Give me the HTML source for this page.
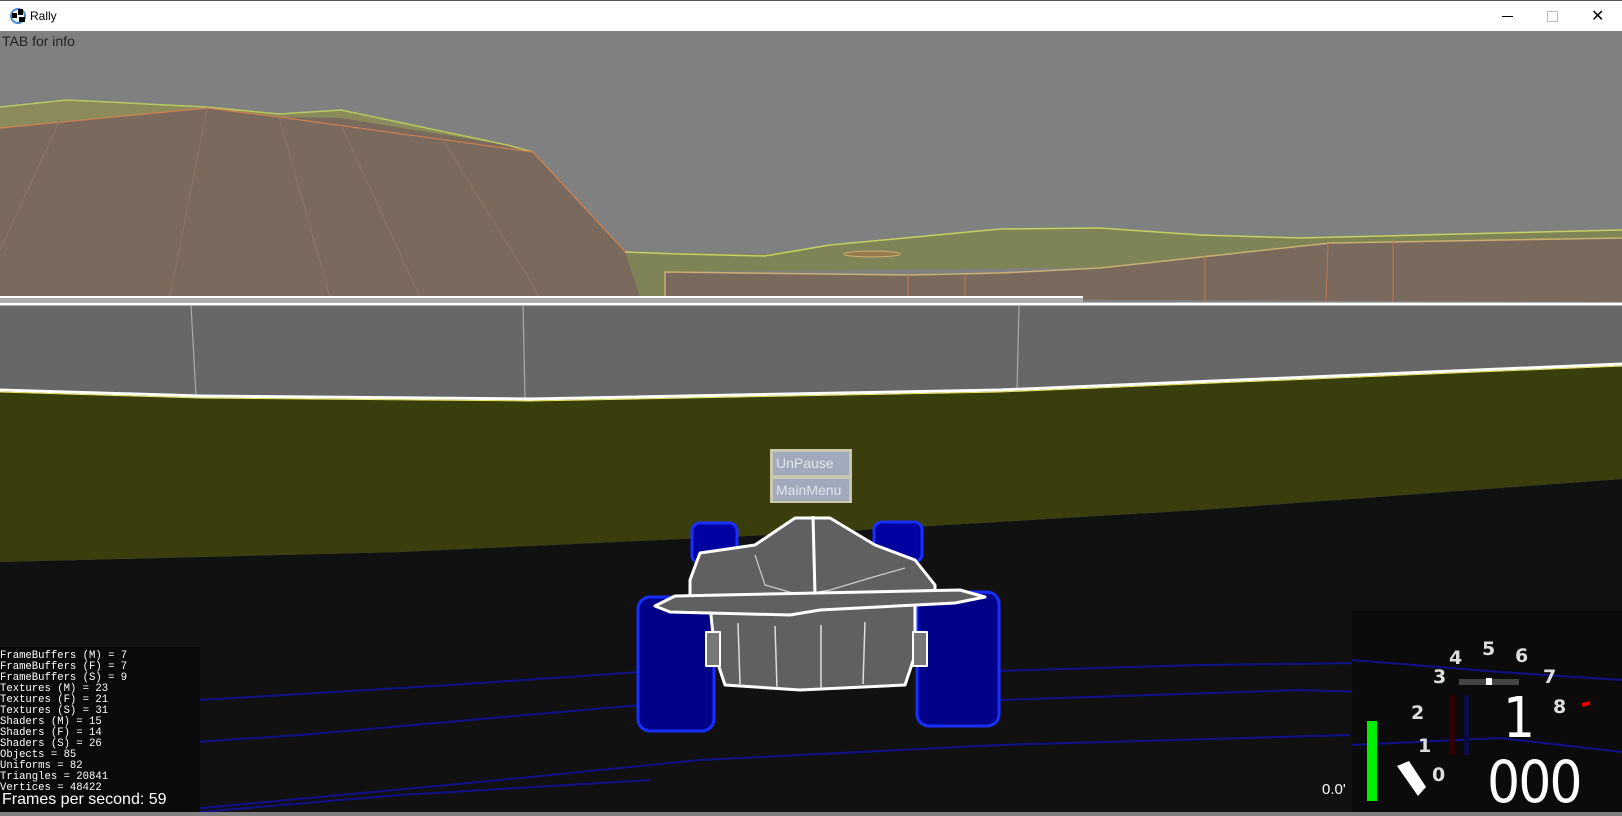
<!DOCTYPE html>
<html><head><meta charset="utf-8"><style>
*{margin:0;padding:0}
body{width:1622px;height:812px;overflow:hidden;position:relative;background:#808080;font-family:"Liberation Sans",sans-serif}
#tb{position:absolute;left:0;top:0;width:1622px;height:31px;background:#fff;border-top:1px solid #555;box-sizing:border-box}
.t{position:absolute;white-space:pre}
svg{position:absolute;left:0;top:0}
.dbg{position:absolute;left:0;top:647px;width:200px;height:165px;background:#0a0a0a;font-family:"Liberation Mono","DejaVu Sans Mono",monospace;font-size:10.6px;line-height:11px;color:#fff;padding-top:0}
</style></head><body>
<svg width="1622" height="812" viewBox="0 0 1622 812">
<!-- left hill -->
<polygon points="0,107 67,100 207,107 279,114 341,110 507,145 533,152 667,297 0,297" fill="#7a6a5e"/>
<polygon points="0,107 67,100 207,107 279,114 341,110 507,145 533,152 507,145 341,118 279,117 207,108 0,128" fill="#8a8a5a"/>
<polyline points="0,107 67,100 207,107 279,114 341,110 507,145 533,152" fill="none" stroke="#b8c860" stroke-width="1.5"/>
<polyline points="0,128 207,108 279,117 533,152 667,297" fill="none" stroke="#d08050" stroke-width="1.2"/>
<g stroke="#8c7566" stroke-width="1"><line x1="60" y1="120" x2="0" y2="250"/><line x1="207" y1="108" x2="170" y2="297"/><line x1="279" y1="117" x2="330" y2="297"/><line x1="341" y1="125" x2="420" y2="297"/><line x1="440" y1="135" x2="540" y2="297"/></g>
<!-- right terrain -->
<polygon points="625,252 765,254 830,245 1000,229 1100,228 1200,235 1300,238 1622,230 1622,262 665,272 680,297 640,297" fill="#7f8456"/>
<polyline points="625,252 680,254 765,256 830,245 1000,229 1100,228 1200,235 1300,238 1622,230" fill="none" stroke="#c4d060" stroke-width="1.5"/>
<polygon points="665,272 910,275 1000,273 1100,268 1330,243 1622,238 1622,302 665,298" fill="#7a6a5e"/>
<polyline points="665,297 665,272 910,275 1000,273 1100,268 1330,243 1622,238" fill="none" stroke="#c8b070" stroke-width="1.5"/>
<g stroke="#c07850" stroke-width="1"><line x1="908" y1="275" x2="908" y2="297"/><line x1="965" y1="274" x2="965" y2="297"/><line x1="1205" y1="255" x2="1205" y2="302"/><line x1="1328" y1="243" x2="1326" y2="302"/><line x1="1393" y1="240" x2="1393" y2="302"/></g>
<ellipse cx="872" cy="254" rx="28" ry="3" fill="#9a7850" stroke="#c8b070"/>
<!-- wall -->
<polygon points="0,302 1622,302 1622,364 1000,390 530,399 200,396 0,390" fill="#676767"/>
<rect x="0" y="296" width="1083" height="6" fill="#aaa"/>
<line x1="0" y1="297" x2="1083" y2="297" stroke="#fff" stroke-width="2"/>
<line x1="0" y1="304" x2="1622" y2="304" stroke="#fff" stroke-width="3"/>
<g stroke="#aaa" stroke-width="1.2"><line x1="191" y1="305" x2="196" y2="396"/><line x1="523" y1="305" x2="525" y2="398"/><line x1="1019" y1="305" x2="1017" y2="391"/></g>
<!-- olive -->
<polygon points="0,390 200,396 530,399 1000,390 1622,364 1622,479 1200,510 811,533 400,552 0,562" fill="#3a3e0d"/>
<polyline points="0,390 200,396 530,399 1000,390 1622,364" fill="none" stroke="#fff" stroke-width="3"/>
<polyline points="0,392 200,398 530,401 1000,392 1622,366" fill="none" stroke="#e8e860" stroke-width="1"/>
<!-- ground -->
<polygon points="0,562 400,552 811,533 1200,510 1622,479 1622,812 0,812" fill="#111"/>
<g stroke="#10108a" stroke-width="2" fill="none">
<polyline points="200,700 450,685 640,672"/>
<polyline points="0,755 300,735 640,705"/>
<polyline points="160,812 500,780 700,760 1000,745 1350,735"/>
<polyline points="960,672 1200,665 1622,660"/>
<polyline points="1000,700 1300,690 1622,700"/>
<polyline points="200,812 400,795 650,780"/>
</g>
<!-- car -->
<g stroke-linejoin="round">
<rect x="692" y="523" width="45" height="40" rx="8" fill="#0000a0" stroke="#1830ff" stroke-width="3"/>
<rect x="874" y="522" width="48" height="40" rx="8" fill="#0000a0" stroke="#1830ff" stroke-width="3"/>
<polygon points="690,580 700,553 755,545 795,518 830,518 875,545 915,560 935,585 935,600 690,600" fill="#606060" stroke="#fff" stroke-width="3"/>
<polyline points="813,516 815,595" stroke="#fff" stroke-width="3" fill="none"/>
<polyline points="755,555 765,585 800,595 830,590 870,578 905,568" stroke="#ccc" stroke-width="1.2" fill="none"/>
<rect x="638" y="597" width="76" height="134" rx="12" fill="#000088" stroke="#1830ff" stroke-width="3"/>
<rect x="917" y="592" width="82" height="134" rx="12" fill="#000088" stroke="#1830ff" stroke-width="3"/>
<polygon points="710,605 915,605 915,655 905,685 800,690 725,685 715,655" fill="#606060" stroke="#fff" stroke-width="3"/>
<g stroke="#ddd" stroke-width="1.5"><line x1="738" y1="623" x2="740" y2="684"/><line x1="775" y1="626" x2="777" y2="688"/><line x1="821" y1="625" x2="821" y2="688"/><line x1="865" y1="622" x2="863" y2="684"/></g>
<polygon points="655,606 675,596 960,590 985,597 955,603 820,610 790,615 670,612" fill="#606060" stroke="#fff" stroke-width="3"/>
<rect x="706" y="632" width="14" height="34" fill="#777" stroke="#fff" stroke-width="2"/>
<rect x="913" y="632" width="14" height="34" fill="#777" stroke="#fff" stroke-width="2"/>
</g>
<!-- HUD -->
<rect x="1352" y="611" width="270" height="201" fill="#0b0b0b"/>
<g stroke="#10108a" stroke-width="2" fill="none"><polyline points="1352,660 1500,672 1622,680"/><polyline points="1352,745 1500,738 1622,752"/></g>
<rect x="1367" y="721" width="10" height="80" fill="#00f000"/>
<rect x="1449" y="695" width="6" height="60" fill="#300000"/>
<rect x="1464" y="695" width="5" height="60" fill="#0a0a44"/>
<rect x="1459" y="679" width="60" height="6" fill="#444"/>
<rect x="1486" y="678" width="6" height="7" fill="#fff"/>
<polygon points="1397,766 1409,761 1426,787 1418,796" fill="#fff"/>
<rect x="1582" y="702" width="8" height="4" fill="#e00" transform="rotate(-15 1586 704)"/>
</g>
</svg>
<div id="tb">
<svg width="18" height="18" viewBox="0 0 18 18" style="left:9px;top:6px"><circle cx="9" cy="9" r="7" fill="none" stroke="#4a8ad0" stroke-width="2"/><rect x="3" y="6" width="5" height="5" fill="#000"/><rect x="9" y="2" width="5" height="6" fill="#000"/><rect x="10" y="10" width="6" height="5" fill="#000"/></svg>
<span class="t" style="left:30px;top:8px;font-size:12px;color:#000">Rally</span>
<div style="position:absolute;left:1502px;top:15px;width:11px;height:1px;background:#000"></div>
<div style="position:absolute;left:1547px;top:10px;width:9px;height:9px;border:1px solid #bbb"></div>
<span class="t" style="left:1591px;top:5px;font-size:16px;color:#000">✕</span>
</div>
<span class="t" style="left:2px;top:33px;font-size:14px;color:#222">TAB for info</span>
<div style="position:absolute;left:770px;top:449px;width:82px;height:54px;background:#c8c8b0"></div>
<div style="position:absolute;left:773px;top:452px;width:76px;height:23px;background:#a0aabb"></div>
<div style="position:absolute;left:773px;top:479px;width:76px;height:22px;background:#a0aabb"></div>
<span class="t" style="left:776px;top:455px;font-size:14px;color:#e0e6ee">UnPause</span>
<span class="t" style="left:776px;top:482px;font-size:14px;color:#e0e6ee">MainMenu</span>
<div class="dbg"><div style="height:4px"></div>FrameBuffers (M) = 7
FrameBuffers (F) = 7
FrameBuffers (S) = 9
Textures (M) = 23
Textures (F) = 21
Textures (S) = 31
Shaders (M) = 15
Shaders (F) = 14
Shaders (S) = 26
Objects = 85
Uniforms = 82
Triangles = 20841
Vertices = 48422</div>
<style>.dbg{white-space:pre}</style>
<span class="t" style="left:2px;top:791px;font-size:16px;color:#fff">Frames per second: 59</span>
<span class="t" style="left:1322px;top:781px;font-size:15px;color:#fff">0.0'</span>
<div style="font-family:'DejaVu Sans',sans-serif;color:#ddd;font-size:19px;font-weight:bold">
<span class="t" style="left:1433px;top:666px">3</span>
<span class="t" style="left:1449px;top:647px">4</span>
<span class="t" style="left:1482px;top:638px">5</span>
<span class="t" style="left:1515px;top:645px">6</span>
<span class="t" style="left:1543px;top:666px">7</span>
<span class="t" style="left:1553px;top:696px">8</span>
<span class="t" style="left:1411px;top:702px">2</span>
<span class="t" style="left:1418px;top:735px">1</span>
<span class="t" style="left:1432px;top:764px">0</span>
</div>
<span class="t" style="left:1503px;top:686px;font-size:56px;color:#fff;font-family:'DejaVu Sans Condensed','DejaVu Sans',sans-serif">1</span>
<span class="t" style="left:1487px;top:748px;font-size:58px;color:#fff;font-family:'DejaVu Sans Condensed','DejaVu Sans',sans-serif;letter-spacing:-2px">000</span>
</body></html>
